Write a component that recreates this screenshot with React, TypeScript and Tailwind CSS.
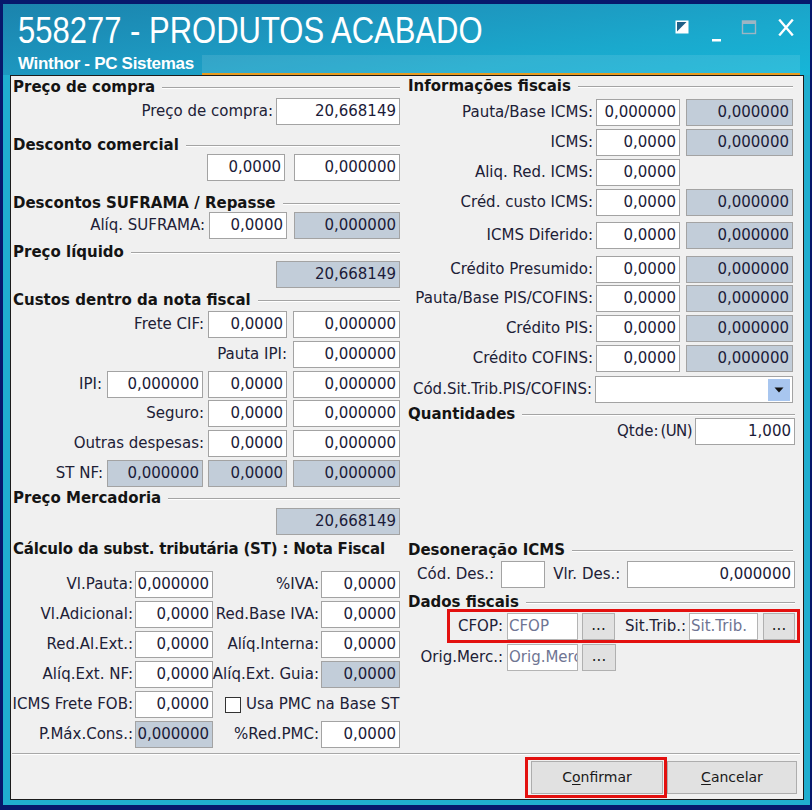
import React from "react";

type BoxProps = { w: string; gray?: boolean; v?: string; className?: string };

function Box({ w, gray, v, className = "" }: BoxProps) {
  return (
    <div
      className={`${w} h-[27px] shrink-0 border border-[#a3a3a3] ${
        gray ? "bg-[#c2cdd9]" : "bg-white"
      } flex items-center justify-end pr-[3px] text-[#1b1b38] leading-none ${className}`}
    >
      {v}
    </div>
  );
}

function Hint({ w, t }: { w: string; t: string }) {
  return (
    <div
      className={`${w} h-[27px] shrink-0 border border-[#b4b4b4] bg-white flex items-center pl-[1px] text-[#6f7593] leading-none overflow-hidden whitespace-nowrap`}
    >
      {t}
    </div>
  );
}

function Dots({ w }: { w: string }) {
  return (
    <div
      className={`${w} h-[27px] shrink-0 border border-[#b0b0b0] bg-[#e1e1e1] flex items-center justify-center text-[#1a1a1a] leading-none pb-[2px]`}
    >
      ...
    </div>
  );
}

function Lbl({ t, className = "" }: { t: string; className?: string }) {
  return <span className={`text-[#202036] whitespace-nowrap leading-none ${className}`}>{t}</span>;
}

function Head({
  t,
  line = true,
  className = "",
  textClass = "",
}: {
  t: string;
  line?: boolean;
  className?: string;
  textClass?: string;
}) {
  return (
    <div className={`flex items-center h-[17px] ${className}`}>
      <span className={`font-bold text-[15px] leading-[17px] text-[#141414] whitespace-nowrap ${textClass}`}>{t}</span>
      {line && <div className="flex-1 ml-[7px] mt-[1px] h-[2px] border-t border-[#a4a4a4] border-b border-b-white" />}
    </div>
  );
}

function Row({ children, className = "" }: { children: React.ReactNode; className?: string }) {
  return <div className={`flex items-center justify-end ${className}`}>{children}</div>;
}

function FiscalRow({ t, a, b, className = "" }: { t: string; a: string; b?: string; className?: string }) {
  return (
    <Row className={`mr-[2px] ${className}`}>
      <Lbl t={t} />
      <Box w="w-[84px]" v={a} className="ml-[3px]" />
      {b !== undefined ? (
        <Box w="w-[107px]" gray v={b} className="ml-[6px]" />
      ) : (
        <div className="w-[107px] ml-[6px] shrink-0" />
      )}
    </Row>
  );
}

function StLabel({ t, className = "" }: { t: string; className?: string }) {
  return (
    <div className={`flex items-center justify-end pr-[2px] h-[27px] ${className}`}>
      <Lbl t={t} />
    </div>
  );
}

function TitleIcons() {
  return (
    <div className="flex items-start -mt-[1px]">
      <svg width="16" height="16" viewBox="0 0 16 16">
        <rect x="1.5" y="1.5" width="13" height="13" fill="#ffffff" />
        <polygon points="3,3 12.5,3 3,12.5" fill="#1f5f86" />
      </svg>
      <svg width="14" height="24" viewBox="0 0 14 24" className="ml-[20px]">
        <rect x="2" y="20" width="9" height="2.5" fill="#ffffff" />
      </svg>
      <svg width="16" height="16" viewBox="0 0 16 16" className="ml-[17px]">
        <rect x="1.5" y="2" width="13" height="12.5" fill="none" stroke="#9db5c3" strokeWidth="1.4" />
        <rect x="1.5" y="2" width="13" height="3" fill="#9db5c3" />
      </svg>
      <svg width="16" height="17" viewBox="0 0 16 17" className="ml-[21px]">
        <path d="M2 1.5 L14 15.5 M14 1.5 L2 15.5" stroke="#ffffff" strokeWidth="2.4" strokeLinecap="square" />
      </svg>
    </div>
  );
}

export default function App() {
  return (
    <div className="w-[812px] h-[810px] bg-[#07186c] pt-[4px] pl-[3px] pr-[2px] pb-[5px] font-['DejaVu_Sans',sans-serif] text-[15px]">
      <div className="h-full flex flex-col bg-[#20aecf] pl-[7px] pr-[6px] pb-[5px]">
        {/* caption */}
        <div className="h-[71px] -ml-[7px] -mr-[6px] pl-[15px] pr-[16px] flex flex-col bg-[linear-gradient(172deg,#1b83ad_0%,#1d98c0_40%,#1aa9cd_70%,#16b6d8_100%)]">
          <div className="mt-[16px] h-[26px] flex justify-between">
            <span className="font-['Liberation_Sans',Arial,sans-serif] text-[31px] leading-[26px] text-white whitespace-nowrap inline-block scale-y-[1.17] origin-[0_24px]">
              558277 - PRODUTOS ACABADO
            </span>
            <TitleIcons />
          </div>
          <div className="mt-[9px] h-[22px] flex">
            <span className="w-[184px] font-['Liberation_Sans',Arial,sans-serif] font-bold text-[17px] leading-[17px] text-white whitespace-nowrap tracking-[-0.3px]">
              Winthor - PC Sistemas
            </span>
            <div className="flex-1 -mr-[6px] bg-white/10 border-b-2 border-[#e79a1f]" />
          </div>
        </div>

        {/* dialog body */}
        <div className="flex-1 flex flex-col bg-[#f0f0f0] border border-[#1c1c1c]">
          <div className="h-[673px] flex">
            {/* left column */}
            <div className="w-[391px] pl-[2px] pr-[2px] flex flex-col">
              <Head t="Preço de compra" className="mt-[3px]" />
              <Row className="mt-[2px]">
                <Lbl t="Preço de compra:" />
                <Box w="w-[124px]" v="20,668149" className="ml-[3px]" />
              </Row>

              <Head t="Desconto comercial" className="mt-[12px]" />
              <Row>
                <Box w="w-[78px]" v="0,0000" />
                <Box w="w-[106px]" v="0,000000" className="ml-[9px]" />
              </Row>

              <Head t="Descontos SUFRAMA / Repasse" className="mt-[14px]" />
              <Row>
                <Lbl t="Alíq. SUFRAMA:" />
                <Box w="w-[78px]" v="0,0000" className="ml-[4px]" />
                <Box w="w-[106px]" gray v="0,000000" className="ml-[7px]" />
              </Row>

              <Head t="Preço líquido" className="mt-[5px]" />
              <Row>
                <Box w="w-[124px]" gray v="20,668149" />
              </Row>

              <Head t="Custos dentro da nota fiscal" className="mt-[4px]" />
              <Row className="mt-[2px]">
                <Lbl t="Frete CIF:" />
                <Box w="w-[79px]" v="0,0000" className="ml-[4px]" />
                <Box w="w-[107px]" v="0,000000" className="ml-[6px]" />
              </Row>
              <Row className="mt-[3px]">
                <Lbl t="Pauta IPI:" />
                <Box w="w-[107px]" v="0,000000" className="ml-[6px]" />
              </Row>
              <Row className="mt-[3px]">
                <Lbl t="IPI:" />
                <Box w="w-[96px]" v="0,000000" className="ml-[5px]" />
                <Box w="w-[79px]" v="0,0000" className="ml-[5px]" />
                <Box w="w-[107px]" v="0,000000" className="ml-[6px]" />
              </Row>
              <Row className="mt-[2px]">
                <Lbl t="Seguro:" />
                <Box w="w-[79px]" v="0,0000" className="ml-[4px]" />
                <Box w="w-[107px]" v="0,000000" className="ml-[6px]" />
              </Row>
              <Row className="mt-[3px]">
                <Lbl t="Outras despesas:" />
                <Box w="w-[79px]" v="0,0000" className="ml-[4px]" />
                <Box w="w-[107px]" v="0,000000" className="ml-[6px]" />
              </Row>
              <Row className="mt-[3px]">
                <Lbl t="ST NF:" />
                <Box w="w-[96px]" gray v="0,000000" className="ml-[4px]" />
                <Box w="w-[79px]" gray v="0,0000" className="ml-[5px]" />
                <Box w="w-[107px]" gray v="0,000000" className="ml-[6px]" />
              </Row>

              <Head t="Preço Mercadoria" className="mt-[3px]" />
              <Row className="mt-[1px]">
                <Box w="w-[124px]" gray v="20,668149" />
              </Row>

              <Head
                t="Cálculo da subst. tributária (ST) : Nota Fiscal"
                line={false}
                className="mt-[6px]"
                textClass="tracking-[-0.2px]"
              />
              <div className="mt-[13px] grid grid-cols-[122px_78px_108px_79px] gap-y-[3px]">
                <StLabel t="Vl.Pauta:" />
                <Box w="w-[78px]" v="0,000000" />
                <StLabel t="%IVA:" />
                <Box w="w-[79px]" v="0,0000" />

                <StLabel t="Vl.Adicional:" />
                <Box w="w-[78px]" v="0,0000" />
                <StLabel t="Red.Base IVA:" />
                <Box w="w-[79px]" v="0,0000" />

                <StLabel t="Red.Al.Ext.:" />
                <Box w="w-[78px]" v="0,0000" />
                <StLabel t="Alíq.Interna:" />
                <Box w="w-[79px]" v="0,0000" />

                <StLabel t="Alíq.Ext. NF:" />
                <Box w="w-[78px]" v="0,0000" />
                <StLabel t="Alíq.Ext. Guia:" />
                <Box w="w-[79px]" gray v="0,0000" />

                <StLabel t="ICMS Frete FOB:" />
                <Box w="w-[78px]" v="0,0000" />
                <div className="col-span-2 flex items-center pl-[12px] h-[27px]">
                  <div className="w-[16px] h-[16px] border border-[#333333] bg-white shrink-0" />
                  <Lbl t="Usa PMC na Base ST" className="ml-[5px]" />
                </div>

                <StLabel t="P.Máx.Cons.:" />
                <Box w="w-[78px]" gray v="0,000000" />
                <StLabel t="%Red.PMC:" />
                <Box w="w-[79px]" v="0,0000" />
              </div>
            </div>

            {/* right column */}
            <div className="flex-1 pl-[6px] pr-[8px] flex flex-col">
              <Head t="Informações fiscais" className="mt-[2px] mr-[2px]" />
              <FiscalRow t="Pauta/Base ICMS:" a="0,000000" b="0,000000" className="mt-[4px]" />
              <FiscalRow t="ICMS:" a="0,0000" b="0,000000" className="mt-[3px]" />
              <FiscalRow t="Aliq. Red. ICMS:" a="0,0000" className="mt-[3px]" />
              <FiscalRow t="Créd. custo ICMS:" a="0,0000" b="0,000000" className="mt-[3px]" />
              <FiscalRow t="ICMS Diferido:" a="0,0000" b="0,000000" className="mt-[6px]" />
              <FiscalRow t="Crédito Presumido:" a="0,0000" b="0,000000" className="mt-[7px]" />
              <FiscalRow t="Pauta/Base PIS/COFINS:" a="0,0000" b="0,000000" className="mt-[2px]" />
              <FiscalRow t="Crédito PIS:" a="0,0000" b="0,000000" className="mt-[3px]" />
              <FiscalRow t="Crédito COFINS:" a="0,0000" b="0,000000" className="mt-[3px]" />
              <Row className="mt-[4px] mr-[2px]">
                <Lbl t="Cód.Sit.Trib.PIS/COFINS:" />
                <div className="ml-[3px] w-[198px] h-[27px] border border-[#a3a3a3] bg-white flex items-center justify-end pr-[2px]">
                  <div className="w-[22px] h-[22px] bg-[#a8c6ef] flex items-center justify-center">
                    <svg width="10" height="6" viewBox="0 0 10 6">
                      <polygon points="0.5,0.5 9.5,0.5 5,5.5" fill="#111111" />
                    </svg>
                  </div>
                </div>
              </Row>

              <Head t="Quantidades" className="mt-[3px]" />
              <Row className="-mt-[5px]">
                <Lbl t="Qtde:" />
                <Lbl t="(UN)" className="ml-[2px] tracking-[-0.6px]" />
                <Box w="w-[100px]" v="1,000" className="ml-[3px]" />
              </Row>

              <Head t="Desoneração ICMS" className="mt-[97px] mr-[2px]" />
              <div className="mt-[2px] flex items-center pl-[9px]">
                <Lbl t="Cód. Des.:" />
                <div className="ml-[7px] w-[44px] h-[27px] border border-[#a3a3a3] bg-white shrink-0" />
                <Lbl t="Vlr. Des.:" className="ml-[8px]" />
                <Box w="flex-1" v="0,000000" className="ml-[7px]" />
              </div>

              <Head t="Dados fiscais" className="mt-[6px]" />
              <div className="-mt-[2px] ml-[39px] -mr-[5px] border-[3px] border-[#e3100f] pt-[1px] flex items-center">
                <div className="w-[53px] h-[27px] flex items-center justify-end">
                  <Lbl t="CFOP:" />
                </div>
                <Hint w="w-[71px] ml-[4px]" t="CFOP" />
                <Dots w="w-[33px] ml-[4px]" />
                <div className="w-[71px] h-[27px] flex items-center justify-end">
                  <Lbl t="Sit.Trib.:" />
                </div>
                <Hint w="w-[69px] ml-[3px]" t="Sit.Trib." />
                <Dots w="w-[32px] ml-[5px]" />
              </div>
              <div className="flex items-center">
                <div className="w-[95px] h-[28px] flex items-center justify-end">
                  <Lbl t="Orig.Merc.:" />
                </div>
                <Hint w="w-[71px] ml-[4px]" t="Orig.Merc" />
                <Dots w="w-[34px] ml-[4px]" />
              </div>
            </div>
          </div>

          {/* footer */}
          <div className="mt-[4px] ml-[1px] mr-[3px] h-[2px] border-t border-[#a8a8a8] border-b border-b-white" />
          <div className="mt-[2px] flex items-center justify-end pr-[6px] text-[14px]">
            <div className="w-[142px] h-[41px] border-[3px] border-[#e3100f] flex items-center pl-[3px]">
              <div className="w-[132px] h-[33px] border border-[#adadad] bg-[#e1e1e1] flex items-center justify-center text-[#1a1a1a]">
                C<span className="underline underline-offset-2">o</span>nfirmar
              </div>
            </div>
            <div className="w-[130px] h-[33px] border border-[#adadad] bg-[#e1e1e1] flex items-center justify-center text-[#1a1a1a]">
              <span className="underline underline-offset-2">C</span>ancelar
            </div>
          </div>
        </div>
      </div>
    </div>
  );
}
